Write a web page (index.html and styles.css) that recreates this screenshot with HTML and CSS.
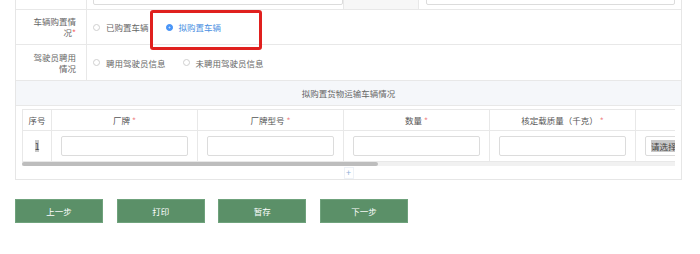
FILE: index.html
```html
<!DOCTYPE html>
<html lang="zh">
<head>
<meta charset="utf-8">
<link rel="stylesheet" href="styles.css">
</head>
<body>
<div class="page">
  <div class="form">
    <div class="row top">
      <div class="label"></div>
      <div class="field f1"><div class="input cut"></div></div>
      <div class="label gray"></div>
      <div class="field f2"><div class="input cut"></div></div>
    </div>
    <div class="row r1">
      <div class="label"><span class="ltext">车辆购置情况<span class="req">*</span></span></div>
      <div class="field radios">
        <span class="radio"><span class="dot"></span>已购置车辆</span>
        <span class="radio on"><span class="dot"></span>拟购置车辆</span>
      </div>
    </div>
    <div class="row r2">
      <div class="label"><span class="ltext">驾驶员聘用情况</span></div>
      <div class="field radios">
        <span class="radio"><span class="dot"></span>聘用驾驶员信息</span>
        <span class="radio"><span class="dot"></span>未聘用驾驶员信息</span>
      </div>
    </div>
    <div class="section-title">拟购置货物运输车辆情况</div>
    <div class="table-wrap">
      <table class="grid">
        <colgroup>
          <col class="c0"><col class="c1"><col class="c1"><col class="c1"><col class="c1"><col class="c5">
        </colgroup>
        <thead>
          <tr>
            <th>序号</th>
            <th>厂牌 <span class="star">*</span></th>
            <th>厂牌型号 <span class="star">*</span></th>
            <th>数量 <span class="star">*</span></th>
            <th>核定载质量（千克） <span class="star">*</span></th>
            <th></th>
          </tr>
        </thead>
        <tbody>
          <tr>
            <td><span class="sel">1</span></td>
            <td><div class="input"></div></td>
            <td><div class="input"></div></td>
            <td><div class="input"></div></td>
            <td><div class="input"></div></td>
            <td class="last"><div class="select"><span class="sel">请选择</span></div></td>
          </tr>
        </tbody>
      </table>
      <div class="scrollbar"><div class="thumb"></div></div>
    </div>
    <div class="add-row"><span class="plus">+</span></div>
  </div>
  <div class="buttons">
    <button class="btn">上一步</button>
    <button class="btn">打印</button>
    <button class="btn">暂存</button>
    <button class="btn">下一步</button>
  </div>
  <div class="highlight"></div>
</div>
</body>
</html>
```

FILE: styles.css
```css
* { box-sizing: border-box; }
html, body { margin: 0; padding: 0; background: #fff; }
body {
  font-family: "Noto Sans CJK SC", "Microsoft YaHei", sans-serif;
  font-size: 8.5px;
  color: #666;
  width: 700px;
  height: 254px;
  overflow: hidden;
}
.page { position: relative; padding-left: 15px; }
.form {
  width: 667px;
  border-left: 1px solid #e6e6e6;
  border-right: 1px solid #e6e6e6;
  border-bottom: 1px solid #e6e6e6;
}
.row { display: flex; border-bottom: 1px solid #e8e8e8; }
.row.top { height: 10px; }
.label {
  width: 71px;
  flex: none;
  border-right: 1px solid #e8e8e8;
  display: flex;
  align-items: center;
  justify-content: flex-end;
  padding: 0 10px 0 8px;
  text-align: right;
  line-height: 11px;
}
.label.gray { width: 76px; background: #f7f7f7; border-left: 1px solid #e8e8e8; }
.ltext { display: block; width: 44px; }
.req { color: #f56c6c; }
.field { flex: 1; overflow: hidden; }
.f1 { width: 256px; flex: none; padding: 0 0 0 6px; }
.f2 { padding: 0 6px 0 7px; }
.input {
  height: 20px;
  border: 1px solid #dcdcdc;
  border-radius: 2px;
  background: #fff;
}
.input.cut { margin-top: -15px; }
.r1 { height: 35px; }
.r2 { height: 36px; }
.radios { display: flex; align-items: center; padding-left: 6px; gap: 17px; }
.radio { display: flex; align-items: center; gap: 6px; color: #666; }
.dot {
  width: 7px; height: 7px; border-radius: 50%;
  border: 1px solid #cfcfcf; background: #fff;
}
.radio.on { color: #4a90e2; }
.radio.on .dot {
  background: #3e8ef7; border-color: #3e8ef7;
  box-shadow: inset 0 0 0 1.5px #3e8ef7, inset 0 0 0 3px #cfe2fb;
}
.section-title {
  height: 25px;
  line-height: 24px;
  text-align: center;
  background: #f5f7fa;
  border-bottom: 1px solid #e8e8e8;
  color: #666;
}
.table-wrap { margin: 3px 6px 0 6px; width: 653px; overflow: hidden; }
.grid { border-collapse: collapse; table-layout: fixed; width: 728px; }
.c0 { width: 29px; }
.c1 { width: 146px; }
.c5 { width: 115px; }
.grid th, .grid td { border: 1px solid #e8e8e8; text-align: center; padding: 0; }
.grid th { height: 21px; font-weight: normal; color: #555; }
.grid td { height: 31px; padding: 0 9px; }
.grid td:first-child { padding: 0; }
.grid td.last { padding: 0 9px 0 9px; text-align: left; }
.star { color: #f08a8a; }
.sel { background: #c8c8c8; color: #444; }
.select {
  width: 100px; height: 20px;
  border: 1px solid #dcdcdc; border-radius: 2px;
  display: flex; align-items: center; padding-left: 5px;
}
.scrollbar { height: 4px; background: #f1f1f1; }
.thumb { width: 356px; height: 4px; background: #bdbdbd; border-radius: 2px; }
.add-row { height: 13px; display: flex; justify-content: center; align-items: center; }
.plus {
  display: block; width: 10px; height: 12px;
  border: 1px solid #eef2f7;
  color: #8fb0d8; font-size: 9px; line-height: 10px; text-align: center;
}
.buttons { display: flex; gap: 13.7px; margin-top: 19px; }
.btn {
  width: 88px; height: 24px;
  background: #5b9068;
  border: 1px solid #6fa27c;
  color: #fff;
  font-family: inherit;
  font-size: 8.5px;
  padding: 0;
}
.highlight {
  position: absolute;
  left: 150px; top: 10px;
  width: 112px; height: 40px;
  border: 3px solid #e0201e;
  border-radius: 3px;
}
```
